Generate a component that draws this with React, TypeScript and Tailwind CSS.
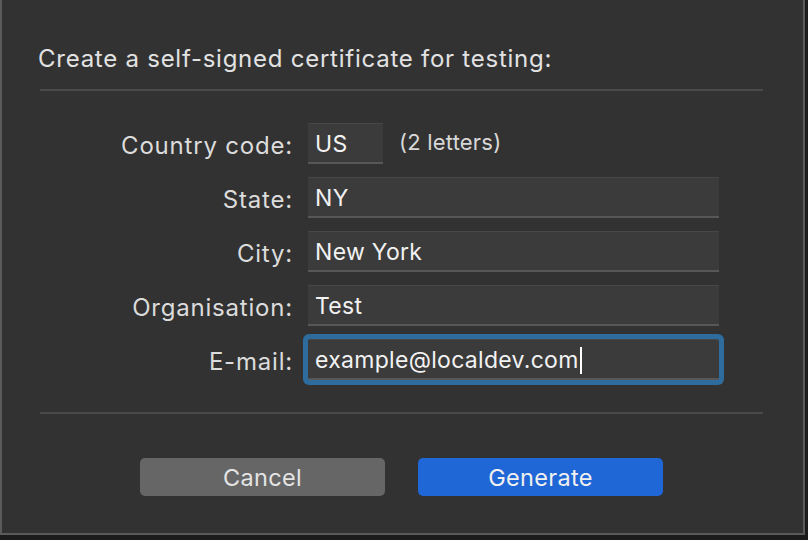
import React from "react";

const font = { fontFamily: "Inter, 'Liberation Sans', sans-serif" };

function Row({ label, value, focused, short, note }: { label: string; value: string; focused?: boolean; short?: boolean; note?: string }) {
  return (
    <div className="flex items-center h-[41px]">
      <div className="w-[291px] text-right text-[24px] tracking-[0.8px] text-[#dcdcdc] pt-[5px]">{label}</div>
      <div className="ml-[15px] flex items-center">
        <div
          className={
            (short ? "w-[75px] " : "w-[411px] ") +
            "h-[41px] flex items-center pl-[7px] pt-[3px] text-[23px] tracking-[0.3px] text-[#f2f2f2] bg-[#3b3b3b] border-t border-t-[#474747] border-b-2 border-b-[#575757] " +
            (focused ? "rounded-[2px] shadow-[0_0_0_5px_#2d6c9d]" : "")
          }
        >
          <span>{value}</span>
          {focused && <span className="ml-[1px] w-[2px] h-[27px] bg-white" />}
        </div>
        {note && <span className="ml-[16px] text-[22px] tracking-[0.2px] text-[#d8d8d8] -mt-[3px]">{note}</span>}
      </div>
    </div>
  );
}

export default function App() {
  return (
    <div className="w-[808px] h-[540px] bg-[#1c1c1c] overflow-hidden" style={font}>
      <div className="w-[805px] h-[535px] bg-[#323232] border-l-2 border-r-2 border-b-2 border-[#5a5a5a] flex flex-col">
        <div className="pt-[44px] pl-[36px] text-[24px] tracking-[0.75px] leading-[30px] text-[#e2e2e2]">
          Create a self-signed certificate for testing:
        </div>
        <div className="mt-[15px] ml-[38px] w-[723px] h-[2px] bg-[#4a4a4a]" />
        <div className="mt-[32px] flex flex-col gap-[13px]">
          <Row label="Country code:" value="US" short note="(2 letters)" />
          <Row label="State:" value="NY" />
          <Row label="City:" value="New York" />
          <Row label="Organisation:" value="Test" />
          <Row label="E-mail:" value="example@localdev.com" focused />
        </div>
        <div className="mt-[32px] ml-[38px] w-[723px] h-[2px] bg-[#4a4a4a]" />
        <div className="mt-[44px] flex pl-[138px] gap-[33px]">
          <button className="w-[245px] h-[38px] pt-[2px] rounded-[5px] bg-[#666666] text-[23.5px] tracking-[0.3px] text-[#e4e4e4]">Cancel</button>
          <button className="w-[245px] h-[38px] pt-[2px] rounded-[5px] bg-[#1f66d6] text-[23.5px] tracking-[0.3px] text-[#f0f0f0]">Generate</button>
        </div>
      </div>
    </div>
  );
}
